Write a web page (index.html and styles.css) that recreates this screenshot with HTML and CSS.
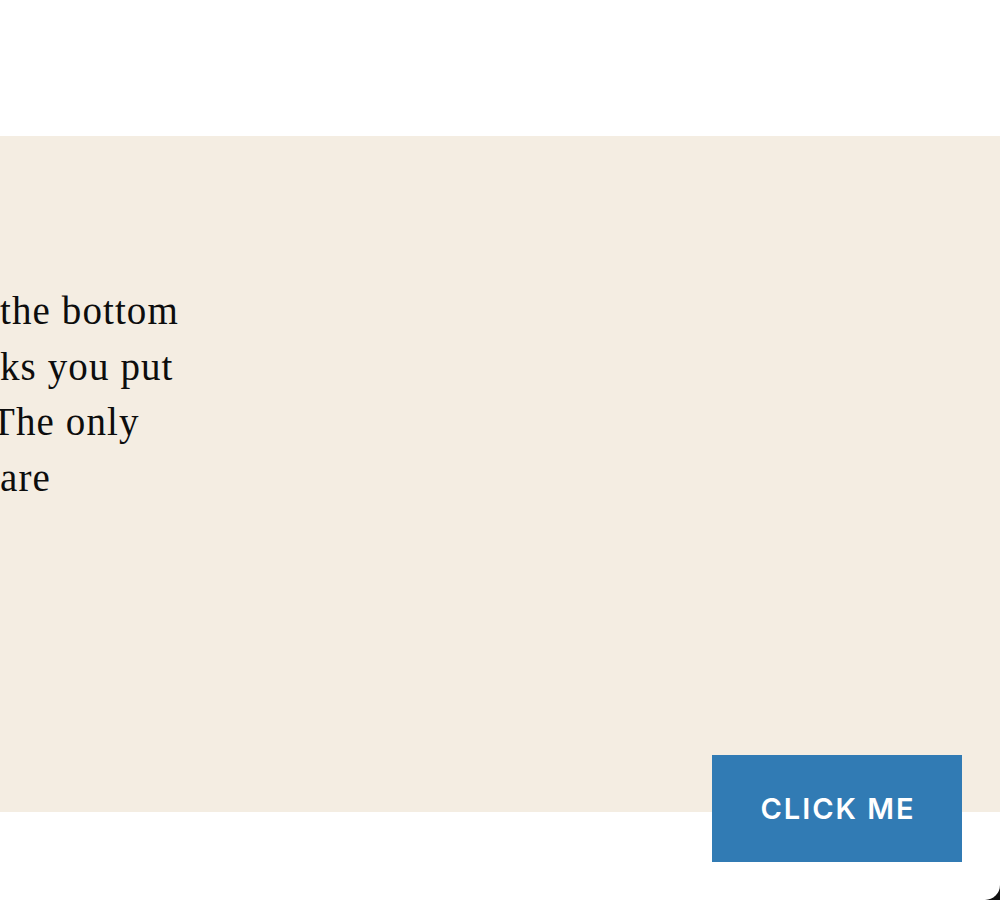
FILE: index.html
```html
<!DOCTYPE html>
<html lang="en">
<head>
<meta charset="utf-8">
<title>Click me</title>
<link rel="stylesheet" href="styles.css">
</head>
<body>
<div class="page">
  <section class="band">
    <p class="copy">
      <span class="line">the bottom</span>
      <span class="line">ks you put</span>
      <span class="line line-cut">The only</span>
      <span class="line">are</span>
    </p>
  </section>
  <div class="actions">
    <button class="cta" type="button">CLICK ME</button>
  </div>
</div>
</body>
</html>
```
FILE: styles.css
```css
html, body {
  margin: 0;
  padding: 0;
}
body {
  background: #111111;
  width: 1000px;
  height: 900px;
  overflow: hidden;
}
.page {
  background: #ffffff;
  height: 900px;
  box-sizing: border-box;
  padding-top: 136px;
  border-bottom-right-radius: 15px;
  overflow: hidden;
}
.band {
  background: #f4ede2;
  height: 676px;
  box-sizing: border-box;
  padding-top: 147px;
}
.copy {
  margin: 0;
  font-family: "Liberation Serif", "Times New Roman", serif;
  font-size: 39px;
  line-height: 55.5px;
  letter-spacing: 1.1px;
  color: #0d0d0d;
}
.line {
  display: block;
  white-space: nowrap;
}
.line-cut {
  margin-left: -9px;
}
.actions {
  display: flex;
  justify-content: flex-end;
  padding-right: 38px;
  margin-top: -57px;
}
.cta {
  width: 250px;
  height: 107px;
  border: 0;
  border-radius: 0;
  background: #317bb4;
  color: #ffffff;
  font-family: Inter, "Liberation Sans", sans-serif;
  font-size: 29px;
  font-weight: 600;
  letter-spacing: 2px;
  padding: 0 0 0 2px;
  cursor: pointer;
}
```
